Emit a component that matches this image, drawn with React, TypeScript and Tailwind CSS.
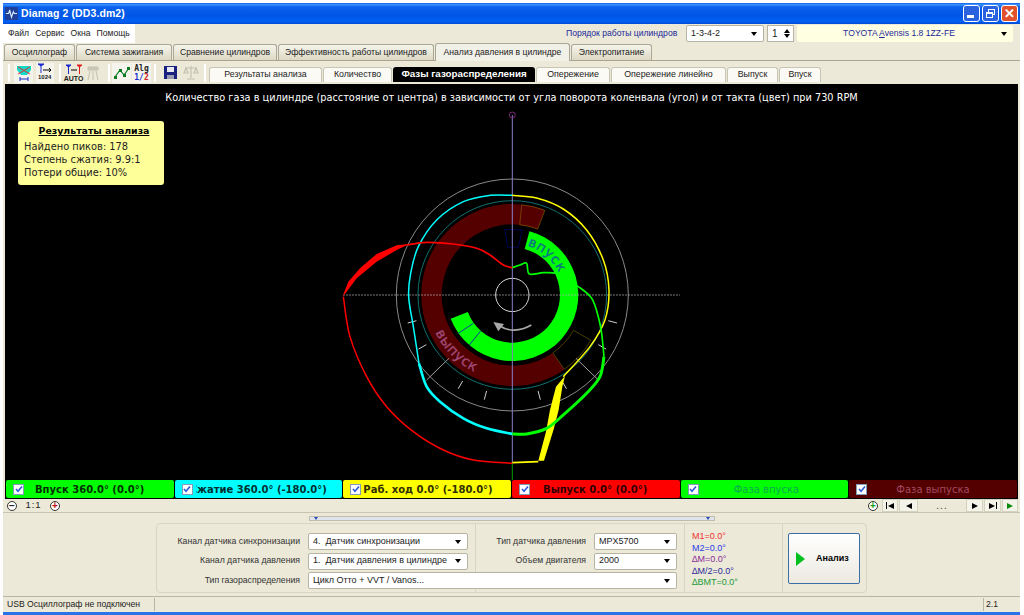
import React from 'react'

const tahoma = { fontFamily: '"Liberation Sans", Arial, sans-serif' }

const mainTabs = [
  { label: 'Осциллограф', w: 'w-[71px]' },
  { label: 'Система зажигания', w: 'w-[96px]' },
  { label: 'Сравнение цилиндров', w: 'w-[104px]' },
  { label: 'Эффективность работы цилиндров', w: 'w-[156px]' },
  { label: 'Анализ давления в цилиндре', w: 'w-[135px]', active: true },
  { label: 'Электропитание', w: 'w-[81px]' },
]

const subTabs = [
  { label: 'Результаты анализа', w: 'w-[113px]' },
  { label: 'Количество', w: 'w-[69px]' },
  { label: 'Фазы газораспределения', w: 'w-[142px]', active: true },
  { label: 'Опережение', w: 'w-[74px]' },
  { label: 'Опережение линейно', w: 'w-[115px]' },
  { label: 'Выпуск', w: 'w-[51px]' },
  { label: 'Впуск', w: 'w-[42px]' },
]

const legend = [
  { label: 'Впуск 360.0° (0.0°)', cls: 'bg-[#00ff00] text-[#003000] font-bold', pad: 'ml-[11px]' },
  { label: 'Сжатие 360.0° (-180.0°)', cls: 'bg-[#00ffff] text-[#003030] font-bold', pad: '-ml-[6px]', cover: 'relative z-10 bg-[#00ffff] pr-[3px]' },
  { label: 'Раб. ход 0.0° (-180.0°)', cls: 'bg-[#ffff00] text-[#303000] font-bold', pad: 'ml-[2px]' },
  { label: 'Выпуск 0.0° (0.0°)', cls: 'bg-[#ff0000] text-[#300000] font-bold', pad: 'ml-[13px]' },
  { label: 'Фаза впуска', cls: 'bg-[#00ff00] text-[#0aa850]', pad: 'ml-[35px]' },
  { label: 'Фаза выпуска', cls: 'bg-[#550000] text-[#a04a60]', pad: 'ml-[29px]' },
]

// clockwise from the top of the dial, in the 3x units the chart is drawn in
const polar = (r: number, deg: number) => {
  const a = (deg * Math.PI) / 180
  return [547 + r * Math.sin(a), 375 - r * Math.cos(a)]
}

const sector = (r1: number, r2: number, a1: number, a2: number) => {
  const big = a2 - a1 > 180 ? 1 : 0
  const [x1, y1] = polar(r2, a1)
  const [x2, y2] = polar(r2, a2)
  const [x3, y3] = polar(r1, a2)
  const [x4, y4] = polar(r1, a1)
  return `M${x1} ${y1}A${r2} ${r2} 0 ${big} 1 ${x2} ${y2}L${x3} ${y3}A${r1} ${r1} 0 ${big} 0 ${x4} ${y4}Z`
}

const arc = (r: number, a1: number, a2: number, cw = true) => {
  const [x1, y1] = polar(r, a1)
  const [x2, y2] = polar(r, a2)
  return `M${x1} ${y1}A${r} ${r} 0 0 ${cw ? 1 : 0} ${x2} ${y2}`
}

const smooth = (p: number[][]) => {
  let d = `M${p[0][0]} ${p[0][1]}`
  for (let i = 0; i < p.length - 1; i++) {
    const a = p[Math.max(i - 1, 0)]
    const b = p[i]
    const c = p[i + 1]
    const e = p[Math.min(i + 2, p.length - 1)]
    d += `C${b[0] + (c[0] - a[0]) / 6} ${b[1] + (c[1] - a[1]) / 6} ${c[0] - (e[0] - b[0]) / 6} ${c[1] - (e[1] - b[1]) / 6} ${c[0]} ${c[1]}`
  }
  return d
}

const cyanTop = [[547, 76], [480, 76], [400, 95], [320, 150], [265, 230], [242, 310], [236, 380], [250, 470], [267, 580]]
const cyanLow = [[267, 580], [290, 650], [330, 695], [400, 745], [470, 775], [547, 792]]
const yellow = [[547, 76], [620, 84], [700, 117], [770, 180], [820, 270], [837, 360], [825, 450], [780, 530], [700, 620]]
const greenTop = [[547, 293], [570, 285], [590, 280], [598, 312], [640, 308], [680, 310], [700, 325], [745, 350], [785, 385], [805, 440], [815, 490], [822, 560]]
const greenLow = [[822, 560], [810, 620], [770, 670], [700, 735], [650, 775], [590, 792], [547, 792]]
const redTop = [[547, 293], [520, 285], [480, 255], [440, 235], [370, 222], [290, 217], [230, 225]]
const redLow = [[40, 380], [60, 500], [110, 620], [170, 710], [250, 785], [340, 840], [430, 870], [547, 880]]

function Chart() {
  const ticks = [15, 30, 60, 75]
  return (
    <svg className="absolute inset-0 h-full w-full">
      <g transform="translate(325 86) scale(0.3333)">
        <path d={sector(212, 273, 145, 380)} fill="#550000" />
        <path d={sector(143, 198, 15, 249)} fill="#00ff00" />
        <path d={sector(212, 272, 6, 21)} fill="#550000" stroke="#8a5a00" strokeWidth="2" />
        <path d={sector(212, 272, 120, 145)} fill="#000" stroke="#6a5a00" strokeWidth="2" />
        <path d="M525 178L577 180L565 232L533 232Z" fill="none" stroke="#000080" strokeWidth="2" />
        <path d="M385 490L430 460M418 525L452 483" stroke="#0a3ca0" strokeWidth="3" />

        <circle cx="547" cy="375" r="348" fill="none" stroke="#8a8a8a" strokeWidth="3" />
        <circle cx="547" cy="375" r="283" fill="none" stroke="#0f6f6f" strokeWidth="3" />
        <circle cx="547" cy="375" r="50" fill="none" stroke="#d8d8d8" strokeWidth="3" />

        {ticks.map((a) => {
          const [x1, y1] = polar(298, 180 + a)
          const [x2, y2] = polar(325, 180 + a)
          const [x3, y3] = polar(298, 180 - a)
          const [x4, y4] = polar(325, 180 - a)
          return (
            <g key={a} stroke="#d0d0d0" strokeWidth="3">
              <line x1={x1} y1={y1} x2={x2} y2={y2} />
              <line x1={x3} y1={y3} x2={x4} y2={y4} />
            </g>
          )
        })}
        <path d="M290 630L357 565M738 565L805 630" stroke="#a0a0a0" strokeWidth="3" />

        <line x1="40" y1="375" x2="1050" y2="375" stroke="#b8b8b8" strokeWidth="3" strokeDasharray="4 5" />
        <line x1="547" y1="-165" x2="547" y2="880" stroke="#8a82c8" strokeWidth="3" />
        <line x1="547" y1="880" x2="547" y2="930" stroke="#00a000" strokeWidth="3" />
        <circle cx="547" cy="-165" r="9" fill="none" stroke="#7a2a7a" strokeWidth="3" />

        <path d={smooth(cyanTop)} fill="none" stroke="#00ffff" strokeWidth="4.5" />
        <path d={smooth(cyanLow)} fill="none" stroke="#00ffff" strokeWidth="8" />
        <path d={smooth(yellow)} fill="none" stroke="#ffff00" strokeWidth="4.5" />
        <path d="M547 878L625 875" stroke="#ffff00" strokeWidth="5" />
        <path d="M625 872L648 785L660 720L678 650L705 618L697 650L686 720L672 775L642 872Z" fill="#ffff00" />
        <path d={smooth(greenTop)} fill="none" stroke="#00ff00" strokeWidth="5" />
        <path d={smooth(greenLow)} fill="none" stroke="#00ff00" strokeWidth="9" />
        <path d={smooth(redTop)} fill="none" stroke="#ff0000" strokeWidth="5" />
        <path d="M38 378L55 335L90 295L140 252L200 226L240 221L200 240L140 275L80 325L45 372Z" fill="#ff0000" />
        <path d={smooth(redLow)} fill="none" stroke="#ff0000" strokeWidth="4.5" />

        <path d="M604 465C570 485 535 485 510 468" fill="none" stroke="#a8a8a8" strokeWidth="5" />
        <path d="M490 456L522 462L505 484Z" fill="#a8a8a8" />

        <defs>
          <path id="inlet-text" d={arc(155, 17, 75)} />
          <path id="exhaust-text" d={arc(257, 244, 180, false)} />
        </defs>
        <text fontSize="40" fill="#0a6e8c" stroke="#0a6e8c" strokeWidth="1" letterSpacing="2" fontFamily='"DejaVu Sans", sans-serif'>
          <textPath href="#inlet-text">впуск</textPath>
        </text>
        <text fontSize="42" fill="#a04a78" stroke="#a04a78" strokeWidth="1" letterSpacing="2" fontFamily='"DejaVu Sans", sans-serif'>
          <textPath href="#exhaust-text">выпуск</textPath>
        </text>
      </g>
    </svg>
  )
}

function Arrow({ className = '' }: { className?: string }) {
  return <span className={`h-0 w-0 border-x-[3px] border-t-[4px] border-x-transparent border-t-black ${className}`} />
}

function Combo({ text, className }: { text: string; className: string }) {
  return (
    <div className={`flex h-[17px] items-center rounded-[2px] border border-[#b8b4a4] bg-white pl-[4px] pr-[6px] ${className}`}>
      <span className="flex-1 truncate whitespace-pre text-[9px] text-[#222]">{text}</span>
      <Arrow />
    </div>
  )
}

function Check({ cover = '' }: { cover?: string }) {
  return (
    <span className={`shrink-0 ${cover}`}>
      <span className="flex h-[11px] w-[11px] items-center justify-center border border-[#7f9db9] bg-white">
        <svg viewBox="0 0 8 8" className="h-[8px] w-[8px]">
          <path d="M1 4L3 6.2L7 1.5" fill="none" stroke="#2a5ad8" strokeWidth="1.6" />
        </svg>
      </span>
    </span>
  )
}

function ToolIcons() {
  return (
    <div className="flex items-center">
      <span className="ml-[5px] h-[18px] w-[2px] border-x border-x-[#fff] bg-[#bdb9a6]" />
      <span className="ml-[4px] flex h-[20px] w-[19px] items-center justify-center bg-[#f5f4ec]">
        <svg viewBox="0 0 16 16" className="h-[16px] w-[16px]">
          <path d="M1 1H15V5L11 10H5L1 5Z" fill="#15d8c8" />
          <path d="M2 2L14 9M14 2L2 9" stroke="#e03030" strokeWidth="1" />
          <path d="M4 14H12M4 12V16M12 12V16" stroke="#1a2ad0" strokeWidth="1" />
        </svg>
      </span>
      <span className="ml-[3px] flex h-[20px] w-[18px] flex-col items-start bg-[#f5f4ec] pl-[2px]">
        <svg viewBox="0 0 16 11" className="h-[11px] w-[16px]">
          <path d="M0 1H6L3 3Z M3 1V10" fill="#1a2ad0" stroke="#1a2ad0" />
          <path d="M5 7H13M11 5L13 7L11 9" fill="none" stroke="#000" />
        </svg>
        <span className="text-[6px] font-bold leading-[7px] text-[#222]">1024</span>
      </span>
      <span className="ml-[5px] h-[18px] w-[2px] border-x border-x-[#fff] bg-[#bdb9a6]" />
      <span className="ml-[4px] flex w-[17px] flex-col items-center">
        <svg viewBox="0 0 16 11" className="h-[11px] w-[16px]">
          <path d="M0 1H5L2.5 3ZM2.5 1V10" fill="#1a2ad0" stroke="#1a2ad0" />
          <path d="M11 1H16L13.5 3ZM13.5 1V10" fill="#e02020" stroke="#e02020" />
          <path d="M5 6H11" stroke="#000" />
        </svg>
        <span className="text-[7px] font-bold leading-[7px] text-[#222]">AUTO</span>
      </span>
      <svg viewBox="0 0 14 16" className="ml-[4px] h-[16px] w-[14px]">
        <path d="M2 2H12V5H2ZM4 6L2 15M7 6V15M10 6L12 15" fill="#ccc9bb" stroke="#c4c1b2" />
      </svg>
      <span className="ml-[8px] h-[18px] w-[2px] border-x border-x-[#fff] bg-[#bdb9a6]" />
      <span className="ml-[2px] flex h-[20px] w-[19px] items-center justify-center bg-[#f5f4ec]">
        <svg viewBox="0 0 16 14" className="h-[14px] w-[16px]">
          <path d="M1 11L6 4L10 9L15 2" fill="none" stroke="#0a7a20" strokeWidth="1.2" />
          <path d="M0 10H3V13H0ZM5 3H8V6H5ZM9 8H12V11H9ZM13 1H16V4H13Z" fill="#0a7a20" />
        </svg>
      </span>
      <span className="ml-[1px] flex h-[20px] w-[19px] flex-col items-center justify-center bg-[#f5f4ec] text-[8px] font-bold leading-[9px]" style={{ fontFamily: '"DejaVu Sans Mono", monospace' }}>
        <span className="text-[#222]">Alg</span>
        <span>
          <span className="text-[#1a2ad0]">1/</span>
          <span className="text-[#d02020]">2</span>
        </span>
      </span>
      <span className="ml-[3px] h-[18px] w-[2px] border-x border-x-[#fff] bg-[#bdb9a6]" />
      <svg viewBox="0 0 13 13" className="ml-[8px] h-[13px] w-[13px]">
        <path d="M0 0H13V13H0Z" fill="#1a2080" />
        <path d="M3 1H10V6H3Z" fill="#e8e8f0" />
        <path d="M3 9H10V13H3Z" fill="#9a9ab0" />
      </svg>
      <svg viewBox="0 0 16 15" className="ml-[6px] h-[15px] w-[16px]">
        <path d="M8 1V13M4 14H12M2 3H14M3 3L1 8H5ZM13 3L11 8H15Z" fill="none" stroke="#c4c1b2" strokeWidth="1.2" />
      </svg>
      <span className="ml-[5px] h-[18px] w-[2px] border-x border-x-[#fff] bg-[#bdb9a6]" />
    </div>
  )
}

function NavButton({ children, className }: { children: React.ReactNode; className: string }) {
  return (
    <span className={`flex h-[13px] items-center justify-center gap-px border border-[#d6d2c0] bg-[#f4f3ea] ${className}`}>{children}</span>
  )
}

const Left = () => <span className="h-0 w-0 border-y-[3.5px] border-r-[6px] border-y-transparent border-r-black" />
const Right = ({ color = 'border-l-black' }: { color?: string }) => (
  <span className={`h-0 w-0 border-y-[3.5px] border-l-[6px] border-y-transparent ${color}`} />
)

function ZoomBadge({ sign, color }: { sign: string; color: string }) {
  return (
    <span className={`flex h-[10px] w-[10px] items-center justify-center rounded-full border border-[#333] bg-white text-[10px] font-bold leading-none ${color}`}>{sign}</span>
  )
}

export default function App() {
  return (
    <div className="h-[615px] w-[1024px] overflow-hidden bg-white pl-[3px] pr-[4px] pt-[3px]" style={tahoma}>
      <div className="flex h-[612px] flex-col bg-[#ece9d8]">
        {/* Title bar */}
        <div className="flex h-[21px] shrink-0 items-center bg-[linear-gradient(180deg,#0a5ce8_0%,#3d95ff_8%,#0a62ec_18%,#0055e5_60%,#0060f2_90%,#0048d0_100%)] pl-[2px] pr-[2px]">
          <svg viewBox="0 0 14 14" className="h-[13px] w-[13px]">
            <path d="M0 0H14V14H0Z" fill="#20409a" />
            <path d="M1 7H4L5 3L7 11L9 5L10 7H13" fill="none" stroke="#d8ecff" strokeWidth="1.2" />
          </svg>
          <span className="ml-[3px] text-[10.5px] font-bold tracking-[0.1px] text-white">Diamag 2 (DD3.dm2)</span>
          <div className="ml-auto flex gap-[2px]">
            <span className="flex h-[17px] w-[17px] items-end rounded-[3px] border border-white bg-[#2a62e0] pb-[3px] pl-[3px]">
              <span className="h-[3px] w-[7px] bg-white" />
            </span>
            <span className="relative flex h-[17px] w-[17px] items-center justify-center rounded-[3px] border border-white bg-[#2a62e0]">
              <span className="absolute left-[5px] top-[3px] h-[6px] w-[7px] border border-white" />
              <span className="absolute left-[3px] top-[6px] h-[6px] w-[7px] border border-t-2 border-white bg-[#2a62e0]" />
            </span>
            <span className="flex h-[17px] w-[17px] items-center justify-center rounded-[3px] border border-white bg-[#e0512c] text-[13px] font-bold leading-none text-white">✕</span>
          </div>
        </div>

        {/* Menu and engine selectors */}
        <div className="flex h-[19px] shrink-0 items-center">
          <div className="flex h-full w-[132px] items-center gap-[6px] bg-white pl-[5px] text-[8.6px] text-[#222]">
            <span>Файл</span>
            <span>Сервис</span>
            <span>Окна</span>
            <span>Помощь</span>
          </div>
          <span className="ml-[431px] w-[120px] whitespace-nowrap text-[8.6px] text-[#1a2a9a]">Порядок работы цилиндров</span>
          <Combo text="1-3-4-2" className="w-[78px]" />
          <div className="ml-[3px] flex h-[17px] w-[27px] items-center justify-between border border-[#b8b4a4] bg-white pl-[4px] pr-[3px] text-[10px] text-[#222]">
            1
            <span className="flex flex-col gap-px">
              <span className="h-0 w-0 border-x-[3px] border-b-[4px] border-x-transparent border-b-black" />
              <Arrow />
            </span>
          </div>
          <div className="ml-[3px] flex h-[17px] w-[216px] items-center rounded-[2px] bg-[#ffffe1] pr-[6px]">
            <span className="flex-1 text-center text-[8.6px] text-[#1a2a9a]">
              TOYOTA <u>A</u>vensis 1.8 1ZZ-FE
            </span>
            <Arrow />
          </div>
        </div>

        {/* Main tabs */}
        <div className="flex h-[18px] shrink-0 items-end gap-px border-b border-[#a8a594] pl-px">
          {mainTabs.map((t) => (
            <div
              key={t.label}
              className={`flex items-center justify-center whitespace-nowrap rounded-t-[3px] border border-b-0 border-[#aaa796] text-[8.6px] text-[#222] ${t.w} ${t.active ? '-mb-px h-[18px] bg-[#f2f1e8]' : 'h-[16px] bg-[linear-gradient(180deg,#f6f5ec,#dcd8c4)]'}`}
            >
              {t.label}
            </div>
          ))}
        </div>

        {/* Plot toolbar and plot tabs */}
        <div className="flex h-[23px] shrink-0 items-center">
          <ToolIcons />
          <div className="mb-[2px] ml-[3px] flex items-end gap-px self-end">
            {subTabs.map((t) => (
              <div
                key={t.label}
                className={`flex h-[15px] items-center justify-center whitespace-nowrap rounded-t-[3px] ${t.w} ${t.active ? 'bg-black text-[9.8px] font-bold text-white' : 'border border-b-0 border-[#c8c5b4] bg-[#fbfaf5] text-[8.8px] text-[#222]'}`}
              >
                {t.label}
              </div>
            ))}
          </div>
        </div>

        {/* Plot */}
        <div className="relative ml-[2px] mr-[2px] h-[396px] shrink-0 bg-black">
          <Chart />
          <p className="pt-[7px] text-center text-[9.75px] text-white" style={{ fontFamily: '"DejaVu Sans", sans-serif' }}>
            Количество газа в цилиндре (расстояние от центра) в зависимости от угла поворота коленвала (угол) и от такта (цвет) при 730 RPM
          </p>
          <div className="absolute left-[13px] top-[37px] h-[64px] w-[146px] rounded-[3px] bg-[#ffff99] pl-[6px] pt-[3px] text-[9.85px] leading-[13px] text-[#222]" style={{ fontFamily: '"DejaVu Sans", sans-serif' }}>
            <div className="mb-[3px] text-center text-[9.4px] font-bold text-black underline">Результаты анализа</div>
            <div>Найдено пиков: 178</div>
            <div>Степень сжатия: 9.9:1</div>
            <div>Потери общие: 10%</div>
          </div>
        </div>

        {/* Stroke legend */}
        <div className="ml-[2px] mr-[2px] flex h-[19px] shrink-0 gap-px bg-black px-px pb-px">
          {legend.map((l) => (
            <div key={l.label} className={`flex h-[18px] flex-1 items-center overflow-hidden rounded-[2px] pl-[7px] ${l.cls}`} style={{ fontFamily: '"DejaVu Sans", sans-serif' }}>
              <Check cover={l.cover} />
              <span className={`whitespace-nowrap text-[10px] ${l.pad}`}>{l.label}</span>
            </div>
          ))}
        </div>

        {/* Zoom and navigation strip */}
        <div className="flex h-[14px] shrink-0 items-center border-b border-[#c8c5b4] pl-[4px] pr-[2px]">
          <ZoomBadge sign="−" color="text-[#222]" />
          <span className="mx-[3px] w-[27px] text-center text-[9.5px] tracking-[1px] text-[#222]">1:1</span>
          <ZoomBadge sign="+" color="text-[#c01010]" />
          <div className="ml-auto flex items-center gap-px">
            <span className="mr-[3px]">
              <ZoomBadge sign="+" color="text-[#10a010]" />
            </span>
            <NavButton className="w-[16px]">
              <span className="h-[7px] w-px bg-black" />
              <Left />
            </NavButton>
            <NavButton className="w-[19px]">
              <Left />
            </NavButton>
            <span className="w-[46px] text-center text-[10px] tracking-[1px] text-[#444]">...</span>
            <NavButton className="w-[17px]">
              <Right />
            </NavButton>
            <NavButton className="w-[17px]">
              <Right />
              <span className="h-[7px] w-px bg-black" />
            </NavButton>
            <NavButton className="w-[16px]">
              <Right color="border-l-[#0a8a0a]" />
            </NavButton>
          </div>
        </div>

        {/* Analysis settings */}
        <div className="flex-1 border-b border-[#b8b5a4]">
          <div className="ml-[306px] mt-[3px] flex h-[5px] w-[406px] items-center justify-between border border-[#c0bdac] bg-[#dfe3ee] px-[4px]">
            <span className="h-0 w-0 border-x-[2px] border-t-[3px] border-x-transparent border-t-[#2a4ab8]" />
            <span className="h-0 w-0 border-x-[2px] border-t-[3px] border-x-transparent border-t-[#2a4ab8]" />
          </div>
          <div className="ml-[153px] mt-[2px] flex h-[70px] w-[711px] rounded-[4px] border border-[#d8d5c4] text-[8.7px] text-[#333]">
            <div className="grid w-[317px] grid-cols-[143px_160px] content-start items-center gap-x-[8px] gap-y-[2.5px] pt-[9px]">
              <span className="whitespace-nowrap text-right">Канал датчика синхронизации</span>
              <Combo text="4.  Датчик синхронизации" className="w-[160px]" />
              <span className="whitespace-nowrap text-right">Канал датчика давления</span>
              <Combo text="1.  Датчик давления в цилиндре" className="w-[160px]" />
              <span className="whitespace-nowrap text-right">Тип газораспределения</span>
              <Combo text="Цикл Отто + VVT / Vanos..." className="relative z-10 w-[369px]" />
            </div>
            <div className="ml-px grid w-[209px] grid-cols-[110px_84px] content-start items-center gap-x-[8px] gap-y-[2.5px] border-l border-[#d8d5c4] pt-[9px]">
              <span className="whitespace-nowrap text-right">Тип датчика давления</span>
              <Combo text="MPX5700" className="w-[83px]" />
              <span className="whitespace-nowrap text-right">Объем двигателя</span>
              <Combo text="2000" className="w-[83px]" />
            </div>
            <div className="w-[99px] border-x border-[#d8d5c4] pl-[7px] pt-[7px] text-[9px] leading-[11.6px]">
              <div className="text-[#f03030]">M1=0.0°</div>
              <div className="text-[#2a3ae8]">M2=0.0°</div>
              <div className="text-[#8a2a9a]">∆M=0.0°</div>
              <div className="text-[#2a2a9a]">∆M/2=0.0°</div>
              <div className="text-[#1a9a3a]">∆ВМТ=0.0°</div>
            </div>
            <div className="ml-[5px] mt-[9px] flex h-[51px] w-[72px] items-center rounded-[2px] border border-[#3a6ea5] bg-[linear-gradient(180deg,#ffffff,#ece9e0)] pl-[7px]">
              <Right color="border-l-[#00c020] !border-y-[7px] !border-l-[9px]" />
              <span className="ml-[11px] text-[9px] font-bold text-black">Анализ</span>
            </div>
          </div>
        </div>

        {/* Status bar */}
        <div className="flex h-[15px] shrink-0 items-center whitespace-nowrap text-[8.6px] text-[#222]">
          <span className="w-[152px] border-r border-[#b8b5a4] pl-[4px]">USB Осциллограф не подключен</span>
          <span className="flex-1" />
          <span className="w-[37px] border-l border-[#b8b5a4] pl-[2px]">2.1</span>
        </div>
        <div className="h-[3px] flex-none bg-[#2a72e8]" />
      </div>
    </div>
  )
}
